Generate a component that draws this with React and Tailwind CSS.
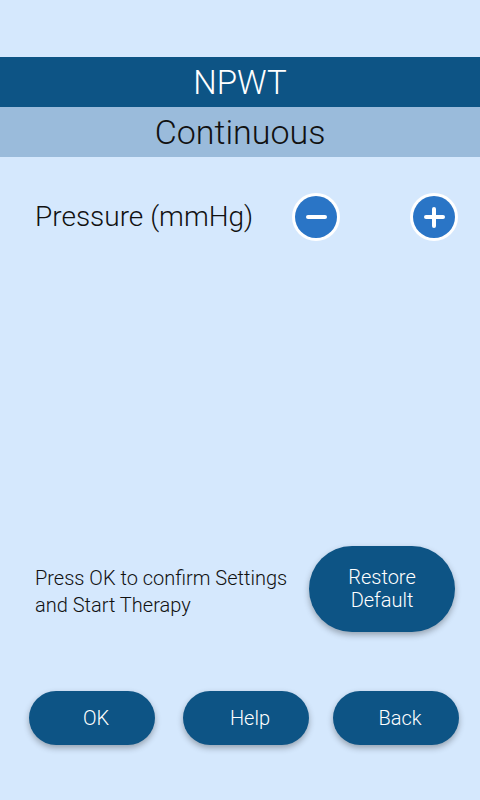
export default function App() {
  const font = { fontFamily: "Roboto, 'Liberation Sans', sans-serif" };
  return (
    <div className="w-[480px] h-[800px] bg-[#d5e8fd] flex flex-col font-light" style={font}>
      <div className="h-[57px]" />
      <div className="h-[50px] bg-[#0d5485] text-white flex items-center justify-center text-[33px] leading-none">
        NPWT
      </div>
      <div className="h-[50px] bg-[#9abbdb] text-[#111] flex items-center justify-center text-[34px] leading-none">
        Continuous
      </div>
      <div className="mt-[36px] h-[48px] flex items-center">
        <div className="pl-[35px] w-[292px] text-[28px] text-[#111] leading-none">Pressure (mmHg)</div>
        <div className="w-[48px] h-[48px] rounded-full bg-white flex items-center justify-center">
          <div className="w-[42px] h-[42px] rounded-full bg-[#2a75c6] flex items-center justify-center">
            <div className="w-[21px] h-[4px] rounded-full bg-white" />
          </div>
        </div>
        <div className="w-[70px]" />
        <div className="w-[48px] h-[48px] rounded-full bg-white flex items-center justify-center">
          <div className="w-[42px] h-[42px] rounded-full bg-[#2a75c6] flex items-center justify-center relative">
            <div className="w-[21px] h-[4px] rounded-full bg-white" />
            <div className="absolute w-[4px] h-[21px] rounded-full bg-white" />
          </div>
        </div>
      </div>
      <div className="mt-[305px] flex items-center">
        <div className="pl-[35px] w-[309px] text-[20px] leading-[27px] text-[#111] pt-[6px]">
          Press OK to confirm Settings<br />and Start Therapy
        </div>
        <div className="w-[146px] h-[86px] rounded-full bg-[#0d5485] text-white flex items-center justify-center text-center text-[20px] leading-[23px] shadow-[0_3px_6px_rgba(0,0,0,0.3)]">
          Restore<br />Default
        </div>
      </div>
      <div className="mt-[59px] flex">
        <div className="ml-[29px] w-[126px] h-[54px] rounded-full bg-[#0d5485] text-white flex items-center justify-center pl-[8px] text-[20px] shadow-[0_3px_6px_rgba(0,0,0,0.3)]">
          OK
        </div>
        <div className="ml-[28px] w-[126px] h-[54px] rounded-full bg-[#0d5485] text-white flex items-center justify-center pl-[8px] text-[20px] shadow-[0_3px_6px_rgba(0,0,0,0.3)]">
          Help
        </div>
        <div className="ml-[24px] w-[126px] h-[54px] rounded-full bg-[#0d5485] text-white flex items-center justify-center pl-[8px] text-[20px] shadow-[0_3px_6px_rgba(0,0,0,0.3)]">
          Back
        </div>
      </div>
    </div>
  );
}
